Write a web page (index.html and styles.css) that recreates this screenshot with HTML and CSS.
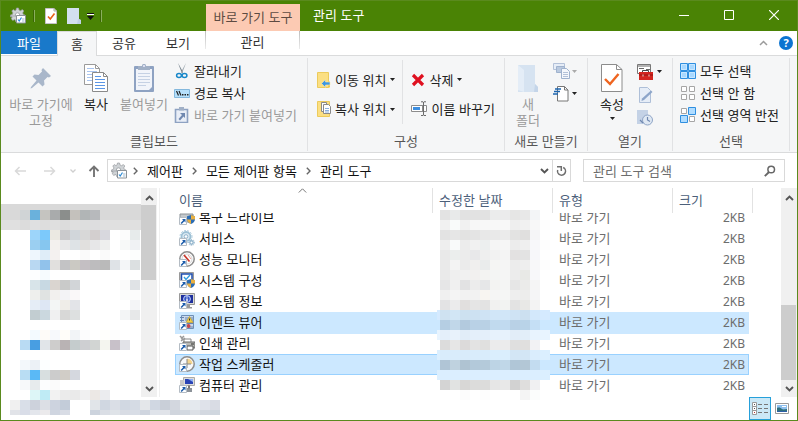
FILE: index.html
```html
<!DOCTYPE html>
<html lang="ko">
<head>
<meta charset="utf-8">
<title>관리 도구</title>
<link rel="stylesheet" href="styles.css">
</head>
<body>
<svg class="defs" aria-hidden="true">
  <defs>
    <symbol id="i-tools" viewBox="0 0 18 18">
      <path d="M7.5 1h2l.5 2 1.500.7 1.900-1.100 1.400 1.400-1.100 1.900.7 1.500 1.500.5v2H1.500v-2l1.800-.5.6-1.500-1.100-1.900 1.400-1.400 1.900 1.100L7 3z" fill="#cfd3d6" stroke="#969a9e" stroke-width=".7"/>
      <path d="M2 9l1.200 1-1 1.800 1.600 1.600 2-1 1.200 2.600H8V9z" fill="#cfd3d6" stroke="#969a9e" stroke-width=".7"/>
      <circle cx="8.500" cy="8" r="2.200" fill="#fff" stroke="#969a9e" stroke-width=".8"/>
      <path d="M7.500 8.500h9v7.500h-9z" fill="#fff" stroke="#8b9298"/>
      <path d="M9 12.500l1.200 1.500 2.300-3.500" fill="none" stroke="#2a8ad6" stroke-width="1.200"/>
      <path d="M13 14h2.500M13 12h2.500" stroke="#9fb9cf"/>
    </symbol>
    <symbol id="i-crumb" viewBox="0 0 5 8"><path d="M.8.8L4 4 .8 7.200" fill="none" stroke="#666" stroke-width="1.400"/></symbol>
    <symbol id="i-up" viewBox="0 0 9 6"><path d="M1 5l3.500-3.500L8 5" fill="none" stroke="#555" stroke-width="1.900"/></symbol>
    <symbol id="i-down" viewBox="0 0 9 6"><path d="M1 1l3.500 3.500L8 1" fill="none" stroke="#555" stroke-width="1.900"/></symbol>
    <symbol id="i-tri" viewBox="0 0 5 3"><path d="M0 0h5L2.500 3z" fill="currentColor"/></symbol>
    <symbol id="i-link" viewBox="0 0 16 16">
      <path d="M.5 8.500h7v7h-7z" fill="#fff" stroke="#b4bcc4"/>
      <path d="M3 10h3.500v3.500l-1.200-1.200L2.700 15l-1.100-1.100 2.600-2.600z" fill="#1b5cab"/>
    </symbol>
    <symbol id="i-shield" viewBox="0 0 8 9">
      <path d="M4 0l4 1.300V4C8 6.500 6 8.200 4 9 2 8.200 0 6.500 0 4V1.300z" fill="#2b6cb4"/>
      <path d="M4 0l4 1.300V4.500H4zM4 4.500V9C2 8.200.3 6.700 0 4.500z" fill="#e9b040"/>
    </symbol>
  </defs>
</svg>
<div class="window">
  <header class="titlebar">
    <div class="quick">
      <button class="plain" aria-label="시스템 메뉴"><svg width="18" height="18"><use href="#i-tools"/></svg></button>
      <i class="tick"></i>
      <button class="plain" aria-label="속성"><svg width="12" height="16" viewBox="0 0 12 16"><path d="M.5.5H9L11.500 3v12.500H.5z" fill="#fff" stroke="#c5c1c9"/><path d="M9 0v3h3" fill="none" stroke="#aaa"/><path d="M3 8.500L5.300 11 9.500 5.500" fill="none" stroke="#e8601c" stroke-width="1.600"/></svg></button>
      <button class="plain" aria-label="새 폴더"><svg width="14" height="16" viewBox="0 0 14 16"><path d="M0 0h12v11l2 1v4H0z" fill="#d3e0f0"/><path d="M10 16l1-5 3 1v4z" fill="#c0d1e7"/></svg></button>
      <button class="plain" aria-label="사용자 지정"><svg width="7" height="7" viewBox="0 0 7 7"><path d="M0 .5h7" stroke="#111"/><path d="M0 1.500h7" stroke="#fff"/><path d="M0 3h7L3.500 7z" fill="#111"/></svg></button>
      <i class="tick"></i>
    </div>
    <div class="context">바로 가기 도구</div>
    <h1>관리 도구</h1>
    <div class="controls">
      <button aria-label="최소화"><svg width="10" height="10"><path d="M0 5.500h10" stroke="#fff"/></svg></button>
      <button aria-label="최대화"><svg width="10" height="10"><path d="M.5.500h9v9h-9z" fill="none" stroke="#fff"/></svg></button>
      <button aria-label="닫기"><svg width="10" height="10"><path d="M0 0l10 10M10 0L0 10" stroke="#fff" stroke-width="1.200"/></svg></button>
    </div>
  </header>

  <nav class="tabs">
    <button class="tab file">파일</button>
    <button class="tab home">홈</button>
    <button class="tab share">공유</button>
    <button class="tab view">보기</button>
    <button class="tab manage">관리</button>
    <div class="tabs-end">
      <button class="plain" aria-label="리본 최소화"><svg width="9" height="6" viewBox="0 0 9 6"><path d="M1 5l3.500-3.500L8 5" fill="none" stroke="#9b9b9b" stroke-width="1.500"/></svg></button>
      <button class="help" aria-label="도움말">?</button>
    </div>
  </nav>

  <section class="ribbon">
    <div class="group">
      <div class="tools clip">
        <button class="large pin off"><svg width="24" height="32" viewBox="0 0 24 32"><path d="M14 4l8 8-2 1.500-1.500-.5-3.500 3.500.5 4-2 2-4-4L3 24l-1.500.5L2 23l5.500-6.500-4-4 2-2 4 .5L13 7.500 12.500 6z" fill="#a9b7ca"/></svg>바로 가기에<br>고정</button>
        <button class="large copy"><svg width="24" height="32" viewBox="0 0 24 32"><path d="M.5.500h11l4 4v16H.5z" fill="#fff" stroke="#9a9a9a"/><path d="M11.500.500v4h4" fill="none" stroke="#9a9a9a"/><path d="M3 4.500h7M3 7.500h10M3 10.500h10M3 13.500h10M3 16.500h5" stroke="#a8c4ef"/><path d="M8.500 8.500h11l4 4v15h-15z" fill="#fff" stroke="#8a8a8a"/><path d="M19.500 8.500v4h4" fill="none" stroke="#8a8a8a"/><path d="M11 12.500h6M11 15.500h10M11 18.500h10M11 21.500h10M11 24.500h10" stroke="#5b96e6"/></svg>복사</button>
        <button class="large paste off"><svg width="22" height="32" viewBox="0 0 22 32"><rect x="1" y="2" width="20" height="26" rx="1" fill="#8ea2c2"/><path d="M3 5h16v18l-3 3H3z" fill="#f1f4fa"/><path d="M5 9.500h12M5 12.500h12M5 15.500h12M5 18.500h12M5 21.500h8" stroke="#c5d1e4"/><path d="M5 2h4c0-3 4-3 4 0h4v4H5z" fill="#a1b0c6"/><circle cx="11" cy="2" r="1" fill="#eef"/></svg>붙여넣기</button>
        <div class="stack">
          <button class="small"><svg width="16" height="16" viewBox="0 0 16 16"><path d="M4 0l5 9-1 1.500z" fill="#6d7a85"/><path d="M12 0L7 9l1 1.500z" fill="#9aa5ae"/><ellipse cx="5" cy="12.500" rx="2.400" ry="2" fill="none" stroke="#1887c9" stroke-width="1.500"/><ellipse cx="10.500" cy="12.500" rx="2.400" ry="2" fill="none" stroke="#1887c9" stroke-width="1.500"/></svg>잘라내기</button>
          <button class="small"><svg width="16" height="16" viewBox="0 0 16 16"><path d="M.5 4.500h15v8H.5z" fill="#b6e0fb" stroke="#84b8dd"/><path d="M2.500 6l2 4.500M5 6l2 4.500" stroke="#222" stroke-width="1.200"/><path d="M8 9.800h1.500M10.500 9.800H12M13 9.800h1.500" stroke="#222" stroke-width="1.400"/></svg>경로 복사</button>
          <button class="small off"><svg width="16" height="16" viewBox="0 0 16 16"><path d="M1.500 2.500h12v13h-12z" fill="#e9eef7" stroke="#8ea2c2" stroke-width="1.600"/><path d="M5 0h5v3.500H5z" fill="#a1b0c6"/><path d="M6 6h5v5L9.500 9.500 6 13.500l-1.500-1.500L8 8z" fill="#7088b0"/></svg>바로 가기 붙여넣기</button>
        </div>
      </div>
      <h2>클립보드</h2>
    </div>
    <div class="group">
      <div class="tools organize">
        <div class="stack wide">
          <button class="small"><svg width="14" height="16" viewBox="0 0 14 16"><path d="M.5.500h11v15H.5z" fill="#fbdf83" stroke="#eccb5c"/><path d="M11 9.500h2v6h-2z" fill="#efc94f"/><path d="M13 10H8.500V7.500L4.500 11.500l4 4V13H13z" fill="#3c97e3" stroke="#fbe9ab" stroke-width=".6"/></svg>이동 위치<svg class="tri" width="5" height="3"><use href="#i-tri"/></svg></button>
          <button class="small"><svg width="14" height="16" viewBox="0 0 14 16"><path d="M.5.500h12v15H.5z" fill="#fbdf83" stroke="#eccb5c"/><path d="M4.500 1.500h5v9h-5z" fill="#fff" stroke="#8a8a8a"/><path d="M6.500 3.500h5l2 2v7h-7z" fill="#fff" stroke="#8a8a8a"/><path d="M8 7.500h4M8 9.500h4M8 11h4" stroke="#6e9ed8" stroke-width=".8"/></svg>복사 위치<svg class="tri" width="5" height="3"><use href="#i-tri"/></svg></button>
        </div>
        <div class="stack wide ruled">
          <button class="small"><svg width="14" height="14" viewBox="0 0 14 14"><path d="M2 2l10 10M12 2L2 12" stroke="#df1020" stroke-width="3.200"/></svg>삭제<svg class="tri" width="5" height="3"><use href="#i-tri"/></svg></button>
          <button class="small"><svg width="16" height="16" viewBox="0 0 16 16"><path d="M.5 4.500h11v6H.5zM11 4.500h4.500v6H11" fill="#fff" stroke="#8c8c8c"/><path d="M2 6h7v3H2z" fill="#3b8ee0"/><path d="M12.500 1v13M10 .8h2l.5.700.500-.7h2M10 14.500h2l.5-.8.500.8h2" fill="none" stroke="#6b6b6b"/></svg>이름 바꾸기</button>
        </div>
      </div>
      <h2>구성</h2>
    </div>
    <div class="group">
      <div class="tools create">
        <button class="large folder off"><svg width="22" height="32" viewBox="0 0 22 32"><path d="M1 1h17v19l3 3v5H1z" fill="#d6e3f1"/><path d="M1 1l6 5v22l-6-2z" fill="#e4edf7"/><path d="M17 28l1-8 3 3v5z" fill="#c4d5e9"/></svg>새<br>폴더</button>
        <div class="stack">
          <button class="small off" aria-label="새 항목"><svg width="17" height="16" viewBox="0 0 17 16"><path d="M.5.500h11v6H.5z" fill="#e6edf7" stroke="#b3c1d8"/><path d="M3.500 3.500h8v6h-8z" fill="#b9c9df" stroke="#9fb2ce"/><path d="M8.500 5.500h5l3 3v7h-8z" fill="#f4f7fc" stroke="#9fb2ce"/><path d="M10 9.500h5M10 11.500h5M10 13.500h5" stroke="#b3c1d8"/></svg><svg class="tri" width="5" height="3"><use href="#i-tri"/></svg></button>
          <button class="small" aria-label="빠른 연결"><svg width="17" height="17" viewBox="0 0 17 17"><path d="M4.500 1.500h7l3.500 3.500v11H4.500z" fill="#fff" stroke="#777"/><path d="M11.500 1.500V5H15" fill="none" stroke="#777"/><path d="M2 4h6M1 6.500h6M0 9h5" stroke="#1c66b0" stroke-width="1.400"/></svg><svg class="tri" width="5" height="3"><use href="#i-tri"/></svg></button>
        </div>
      </div>
      <h2>새로 만들기</h2>
    </div>
    <div class="group">
      <div class="tools open">
        <button class="large prop"><svg width="22" height="32" viewBox="0 0 22 32"><path d="M.5.500h15l5.500 5v22H.5z" fill="#fff" stroke="#8c8c8c"/><path d="M15.500.500v5H21" fill="none" stroke="#8c8c8c"/><path d="M4 15l5 5 8.500-10" fill="none" stroke="#ef6520" stroke-width="2.400"/></svg>속성<br><svg class="tri" width="5" height="3"><use href="#i-tri"/></svg></button>
        <div class="stack">
          <button class="small" aria-label="열기"><svg width="16" height="16" viewBox="0 0 16 16"><path d="M.5.500h13v9H.5z" fill="#fff" stroke="#777"/><path d="M1 2h12M2 4.500h5M9 5.500h4" stroke="#666"/><path d="M5.500 8V6.500h6V8" fill="none" stroke="#444"/><path d="M2 8h14v8H2z" fill="#d3251f"/><path d="M2 11h14" stroke="#8f1512"/><path d="M5.500 10.500h1v2h-1zM11.500 10.500h1v2h-1z" fill="#f6d7cf"/></svg><svg class="tri" width="5" height="3"><use href="#i-tri"/></svg></button>
          <button class="small off" aria-label="편집"><svg width="16" height="16" viewBox="0 0 16 16"><path d="M2.500.500h8l3 3v12h-11z" fill="#e6edf7" stroke="#aebfd8"/><path d="M14 3.500l1.500 1.500L7 13l-2.500 1L5 11.500z" fill="#8da5c9"/></svg></button>
          <button class="small off" aria-label="히스토리"><svg width="16" height="16" viewBox="0 0 16 16"><path d="M0 0h11v14H0z" fill="#c4d2e6"/><circle cx="10.500" cy="10" r="5" fill="#dfe8f3" stroke="#8fa5c6"/><path d="M10.500 7v3l2.500 1.500M3 10l3 3" fill="none" stroke="#7088b0" stroke-width="1.200"/></svg></button>
        </div>
      </div>
      <h2>열기</h2>
    </div>
    <div class="group">
      <div class="tools select">
        <div class="stack">
          <button class="small"><svg width="16" height="16" viewBox="0 0 16 16"><path d="M.5.500h7v7h-7zM8.500.500h7v7h-7zM.5 8.500h7v7h-7zM8.500 8.500h7v7h-7z" fill="#a8d8ff" stroke="#2f8fe0"/><path d="M1.500 1.500h5v5h-5zM9.500 1.500h5v5h-5zM1.500 9.500h5v5h-5zM9.500 9.500h5v5h-5z" fill="none" stroke="#c9e7ff"/></svg>모두 선택</button>
          <button class="small"><svg width="16" height="16" viewBox="0 0 16 16"><path d="M1.500 1.500h5v5h-5zM9.500 1.500h5v5h-5zM1.500 9.500h5v5h-5zM9.500 9.500h5v5h-5z" fill="#fff" stroke="#a6a6a6"/></svg>선택 안 함</button>
          <button class="small"><svg width="16" height="16" viewBox="0 0 16 16"><path d="M1.500 1.500h5v5h-5zM9.500 9.500h5v5h-5z" fill="#fff" stroke="#a6a6a6"/><path d="M8.500.500h7v7h-7zM.5 8.500h7v7h-7z" fill="#b0dcff" stroke="#2f8fe0"/></svg>선택 영역 반전</button>
        </div>
      </div>
      <h2>선택</h2>
    </div>
  </section>

  <div class="address">
    <div class="history">
      <button class="plain arrow" aria-label="뒤로"><svg width="12" height="10" viewBox="0 0 12 10"><path d="M12 5H1.500M5.500 1l-4 4 4 4" fill="none" stroke="#d9d9d9" stroke-width="1.500"/></svg></button>
      <button class="plain arrow" aria-label="앞으로"><svg width="12" height="10" viewBox="0 0 12 10"><path d="M0 5h10.500M6.500 1l4 4-4 4" fill="none" stroke="#d9d9d9" stroke-width="1.500"/></svg></button>
      <button class="plain recent" aria-label="최근 위치"><svg width="6" height="4" viewBox="0 0 6 4"><path d="M.5.500L3 3 5.500.500" fill="none" stroke="#cfcfcf" stroke-width="1.300"/></svg></button>
      <button class="plain up" aria-label="위로"><svg width="12" height="12" viewBox="0 0 12 12"><path d="M6 12V1.500M1.500 6L6 1.500 10.500 6" fill="none" stroke="#747474" stroke-width="1.900"/></svg></button>
    </div>
    <div class="path">
      <svg width="18" height="18"><use href="#i-tools"/></svg>
      <svg width="5" height="8"><use href="#i-crumb"/></svg><a href="#">제어판</a>
      <svg width="5" height="8"><use href="#i-crumb"/></svg><a href="#">모든 제어판 항목</a>
      <svg width="5" height="8"><use href="#i-crumb"/></svg><a href="#">관리 도구</a>
      <button class="plain drop" aria-label="이전 위치"><svg width="9" height="6"><use href="#i-down"/></svg></button>
      <button class="refresh" aria-label="새로 고침"><svg width="11" height="12" viewBox="0 0 11 12"><path d="M7.200 2.500A4 4 0 1 1 1.700 5" fill="none" stroke="#6e6e6e" stroke-width="1.500"/><path d="M1 1.700h4.300v4.300" fill="none" stroke="#6e6e6e" stroke-width="1.500"/></svg></button>
    </div>
    <label class="search"><input type="text" aria-label="검색" placeholder="관리 도구 검색"><svg width="12" height="12" viewBox="0 0 12 12"><circle cx="7.200" cy="4.500" r="3.300" fill="none" stroke="#666" stroke-width="1.500"/><path d="M5 7L.8 11.200" stroke="#666" stroke-width="1.900"/></svg></label>
  </div>

  <main>
    <aside class="tree">
      <div class="tree-body">
        <div class="tree-current"></div>
        <div class="mosaic tree-cells" data-mosaic="tree"></div>
      </div>
      <div class="scroll top"><svg width="9" height="6"><use href="#i-up"/></svg><div class="track"><div class="thumb"></div></div><svg width="9" height="6"><use href="#i-down"/></svg></div>
    </aside>
    <div class="list">
      <table>
        <thead><tr><th>이름<svg class="sort" width="9" height="5" viewBox="0 0 9 5"><path d="M.8 4.500L4.500.800l3.700 3.700" fill="none" stroke="#777"/></svg></th><th>수정한 날짜</th><th>유형</th><th>크기</th></tr></thead>
        <tbody>
          <tr><td><svg width="16" height="16" viewBox="0 0 16 16"><path d="M1 5h13v8H1z" fill="#c3c8cc" stroke="#8c9297"/><use href="#i-link"/><use href="#i-shield" x="8" y="6" width="8" height="9"/></svg>복구 드라이브</td><td></td><td>바로 가기</td><td>2KB</td></tr>
          <tr><td><svg width="16" height="16" viewBox="0 0 16 16"><circle cx="7" cy="6.500" r="6" fill="none" stroke="#a9c9dc" stroke-dasharray="1.800 1.400"/><circle cx="7" cy="6.500" r="4.500" fill="#dbe9f1" stroke="#9cc0d5" stroke-width="1.800"/><circle cx="7" cy="6.500" r="1.800" fill="#fff" stroke="#8fb3cb"/><circle cx="12.500" cy="12.500" r="1.700" fill="#fff" stroke="#8fb3cb" stroke-width="1.400"/><circle cx="12.500" cy="12.500" r="3" fill="none" stroke="#8fb3cb" stroke-dasharray="1 1.200"/><use href="#i-link"/></svg>서비스</td><td></td><td>바로 가기</td><td>2KB</td></tr>
          <tr><td><svg width="16" height="16" viewBox="0 0 16 16"><circle cx="8" cy="8" r="7.200" fill="#fff" stroke="#8d8d8d" stroke-width="1.500"/><circle cx="8" cy="8" r="5" fill="none" stroke="#d7d7d7"/><path d="M5 4l5.500 6.500" stroke="#c9372b" stroke-width="1.800"/><path d="M9 4l3 4" stroke="#e79d94"/><use href="#i-link"/></svg>성능 모니터</td><td></td><td>바로 가기</td><td>2KB</td></tr>
          <tr><td><svg width="16" height="16" viewBox="0 0 16 16"><path d="M.5.500h14v11H.5z" fill="#c8c8c8" stroke="#999"/><path d="M2.500 2h10.500v8H2.500z" fill="#fff" stroke="#1e4db0" stroke-width="1.500"/><path d="M5 5l2 2.500L11 3" fill="none" stroke="#2f9be0" stroke-width="1.300"/><use href="#i-link"/><use href="#i-shield" x="8" y="7" width="8" height="9"/></svg>시스템 구성</td><td></td><td>바로 가기</td><td>2KB</td></tr>
          <tr><td><svg width="16" height="16" viewBox="0 0 16 16"><path d="M.5.500h15v11H.5z" fill="#d9dad4" stroke="#999"/><path d="M2 2h12v8H2z" fill="#1e2f9c"/><circle cx="8" cy="6" r="3.400" fill="#3555c4" stroke="#c6d6ff"/><path d="M8 5.500V8.500M8 3.500v1" stroke="#fff" stroke-width="1.400"/><path d="M8 12h3v2h2v1.500H7z" fill="#999"/><use href="#i-link"/></svg>시스템 정보</td><td></td><td>바로 가기</td><td>2KB</td></tr>
          <tr class="chosen"><td><svg width="16" height="16" viewBox="0 0 16 16"><path d="M2.500 1.500h12v13h-12z" fill="#c9d9ec" stroke="#6e8fb5"/><path d="M1 3.500h4M1 6.500h4M9 13h5M6 4h8M6 6h8M6 9.500h8" stroke="#6885b0"/><path d="M10.500 2.500l3.500 6H7z" fill="#f3cf45" stroke="#c09a2a" stroke-width=".7"/><path d="M10.500 4.500v2" stroke="#333"/><circle cx="9.500" cy="12" r="2" fill="#c8474a"/><use href="#i-link"/></svg>이벤트 뷰어</td><td></td><td>바로 가기</td><td>2KB</td></tr>
          <tr><td><svg width="16" height="16" viewBox="0 0 16 16"><path d="M5 4h7v4H5z" fill="#fff" stroke="#888"/><path d="M4 7h12v6H4z" fill="#b8b8b3" stroke="#666"/><path d="M8 11h6v4H8z" fill="#fff" stroke="#555"/><path d="M1 1l4 4M5 1L2 4M2 6l4-3" stroke="#999" stroke-width="1.500"/><path d="M12 9h3" stroke="#333"/><use href="#i-link"/></svg>인쇄 관리</td><td></td><td>바로 가기</td><td>2KB</td></tr>
          <tr class="chosen focused"><td><svg width="16" height="16" viewBox="0 0 16 16"><circle cx="8" cy="8" r="7.200" fill="#f7f8fa" stroke="#8d8d8d" stroke-width="1.500"/><path d="M8 8V2.500A5.500 5.500 0 0 1 13.500 8z" fill="#f3d38c"/><path d="M8 3v9M4 8h8" fill="none" stroke="#888"/><use href="#i-link"/></svg>작업 스케줄러</td><td></td><td>바로 가기</td><td>2KB</td></tr>
          <tr><td><svg width="16" height="16" viewBox="0 0 16 16"><path d="M4.500.500h11v8h-11z" fill="#ddd" stroke="#aaa"/><path d="M6 2h8v5H6z" fill="#2943b5"/><path d="M9 2h5v3z" fill="#8fb0f5"/><path d="M1 3h4v5H1z" fill="#c8c8c8"/><path d="M8 11h5v4H8z" fill="#8c9299"/><path d="M10 8.500v3" stroke="#777" stroke-width="2"/><use href="#i-link"/></svg>컴퓨터 관리</td><td></td><td>바로 가기</td><td>2KB</td></tr>
        </tbody>
      </table>
      <div class="mosaic date-cells" data-mosaic="dates"></div>
      <div class="scroll bottom"><svg width="9" height="6"><use href="#i-up"/></svg><div class="track"><div class="thumb"></div></div><svg width="9" height="6"><use href="#i-down"/></svg></div>
    </div>
  </main>

  <footer class="status">
    <div class="mosaic status-cells" data-mosaic="status"></div>
    <button class="details" aria-label="자세히"><svg width="16" height="13" viewBox="0 0 16 13"><path d="M.5.500h4v4h-4zM.5 4.500h4v4h-4zM.5 8.500h4v4h-4z" fill="#fff" stroke="#999"/><path d="M2 2.500h1M2 6.500h1" stroke="#555"/><path d="M2 10.500h1" stroke="#b33"/><path d="M6 2.500h4M12 2.500h4M6 6.500h4M12 6.500h4M6 10.500h4M12 10.500h4" stroke="#777"/></svg></button>
    <button class="plain" aria-label="큰 아이콘"><svg width="14" height="11" viewBox="0 0 14 11"><path d="M.5.500h13v10H.5z" fill="#fff" stroke="#999"/><path d="M2 2h10v7H2z" fill="#8fc0ee"/><path d="M2 5c2-1 4 0 5 1s3 0 5 0v3H2z" fill="#2f6f7c"/><path d="M2 8h10v1H2z" fill="#2c5fa8"/><path d="M7 3.500h4" stroke="#fff"/></svg></button>
  </footer>
</div>
<script src="mosaic.js"></script>
</body>
</html>
```
FILE: styles.css
```css
* { box-sizing: border-box; }
body {
  margin: 0;
  font: 13px/16px "Noto Sans CJK KR", sans-serif;
  color: #222;
  background: #fff;
}
button { font: inherit; color: inherit; padding: 0; border: 0; background: none; }
svg { display: block; flex: none; }
h1, h2 { margin: 0; font-size: 13px; font-weight: 400; }
.defs { position: absolute; width: 0; height: 0; }
.plain { display: grid; place-items: center; }

.window {
  display: flex;
  flex-direction: column;
  height: 100vh;
  border: 1px solid #5a8a1e;
  overflow: hidden;
}

/* Title bar */
.titlebar { display: flex; flex: none; height: 30px; background: #4a8305; color: #fff; }
.quick { display: flex; align-items: center; width: 205px; padding-left: 8px; }
.quick .plain { margin-right: 6px; }
.quick .tick + .plain { margin-right: 10px; }
.tick { width: 2px; height: 12px; margin-right: 10px; border: solid #3a6803; border-width: 0 0 0 1px; background: #8aaf5d; }
.context { width: 94px; margin-top: 3px; line-height: 26px; text-align: center; background: #fccab3; color: #5d4a42; }
h1 { flex: 1; padding-left: 13px; line-height: 28px; }
.controls { display: flex; padding-right: 1px; }
.controls button { display: grid; place-items: center; width: 45px; height: 28px; }

/* Tabs */
.tabs { display: flex; flex: none; height: 25px; border-bottom: 1px solid #dadbdc; }
.tab { line-height: 22px; color: #333; text-align: center; }
.file { width: 56px; height: 23px; background: #1979ca; color: #fff; }
.home { width: 40px; height: 25px; border: solid #dadbdc; border-width: 1px 1px 0; background: #f5f6f7; }
.share { width: 54px; }
.view { width: 54px; }
.manage { width: 95px; height: 18px; border: 1px solid; border-width: 0 1px; border-image: linear-gradient(#bbb, #eee) 1; }
.tabs-end { display: flex; flex: 1; justify-content: flex-end; align-items: center; gap: 11px; padding-right: 4px; }
.help { width: 14px; height: 14px; border-radius: 7px; background: #0b74d1; color: #fff; font: bold 11px/14px "Noto Sans", sans-serif; }

/* Ribbon */
.ribbon {
  display: grid;
  grid-template-columns: 307px 197px 83px 85px 117px;
  flex: none;
  padding: 2px 0 1px;
  background: #f5f6f7;
  border-bottom: 1px solid #dadbdc;
}
.group { display: flex; flex-direction: column; border-right: 1px solid #e1e2e4; }
.group h2 { line-height: 20px; text-align: center; color: #555; }
.tools { display: flex; height: 73px; padding-top: 2px; }
.stack { display: flex; flex-direction: column; }
.small { display: flex; align-items: center; gap: 4px; height: 22px; text-align: left; white-space: nowrap; color: #222; }
.large { line-height: 16px; text-align: center; white-space: nowrap; align-self: flex-start; color: #222; }
.large svg { margin: 4px auto 0; }
.small.off, .large.off { color: #9a9a9a; }
.tri { color: #222; }
.off .tri { color: #aaa; }
.large .tri { margin-top: 5px; }
.clip { padding-left: 7px; }
.pin { width: 66px; }
.copy { width: 44px; }
.paste { width: 52px; }
.clip .stack { margin-left: 4px; }
.organize { padding-left: 9px; }
.wide .small { height: 30px; }
.organize .stack { height: 64px; padding-top: 5px; }
.ruled { margin-left: 7px; padding-left: 8px; border-left: 1px solid #e1e2e4; }
.create { padding-left: 7px; }
.folder { width: 32px; }
.create .stack { margin-left: 9px; }
.create .small { gap: 2px; }
.open { padding-left: 7px; }
.prop { width: 34px; }
.open .stack { margin-left: 8px; }
.open .small { height: 23px; }
.select { padding-left: 7px; }

/* Address bar */
.address { display: flex; flex: none; height: 35px; padding: 6px 12px 6px 0; }
.history { display: flex; align-items: center; width: 106px; padding-left: 7px; gap: 6px; }
.arrow { width: 24px; }
.recent { width: 10px; }
.up { width: 20px; }
.path { display: flex; flex: 1; align-items: center; gap: 9px; border: 1px solid #d9d9d9; padding-left: 2px; white-space: nowrap; }
.path > svg:first-child { margin-right: -4px; }
.path a { color: #111; text-decoration: none; }
.drop { margin: 0 -6px 0 auto; }
.refresh { display: grid; place-items: center; width: 18px; height: 21px; border-left: 1px solid #d9d9d9; }
.search { display: flex; align-items: center; width: 202px; margin-left: 12px; padding: 0 8px 0 9px; border: 1px solid #d9d9d9; }
.search input { flex: 1; min-width: 0; padding: 0; border: 0; outline: 0; font: inherit; }
.search input::placeholder { color: #6d6d6d; }

/* Panes */
main { display: flex; flex: 1; min-height: 0; }
.tree { display: flex; width: 159px; padding-right: 2px; border-right: 1px solid #f0f0f0; }
.tree-body { position: relative; flex: 1; padding-top: 22px; }
.tree-current { position: absolute; top: 16px; left: 0; right: 0; height: 26px; background: linear-gradient(#d9d9d9 16px, #e0e0e0 16px); }
.mosaic { display: grid; grid-auto-rows: 10px; }
.tree-cells { position: relative; grid-template-columns: 9px repeat(13, 10px); }
.date-cells { position: absolute; top: 22px; left: 277px; grid-template-columns: 3px repeat(11, 10px); }
.status-cells { grid-template-columns: repeat(21, 10px); grid-template-rows: 10px 5px; margin-right: auto; }
.scroll { display: flex; flex-direction: column; align-items: center; width: 16px; padding: 7px 0 5px; background: #f0f0f0; }
.track { display: flex; flex: 1; align-self: stretch; margin: 4px 0 6px; padding-right: 1px; }
.thumb { flex: 1; background: #cdcdcd; }
.top .thumb { height: 43%; }
.bottom .track { align-items: flex-end; }
.bottom .thumb { height: 43%; }

.list { position: relative; display: flex; flex: 1; min-width: 0; }
table { display: flex; flex-direction: column; flex: 1; min-width: 0; color: #6d6d6d; }
thead { display: block; padding: 0 28px 0 15px; }
tr { display: grid; grid-template-columns: 1fr 120px 120px 80px; }
th { position: relative; height: 25px; padding: 0 0 0 6px; border-right: 1px solid #e2e2e2; font-weight: 400; line-height: 24px; text-align: left; color: #4c607a; }
th:first-child { padding-left: 4px; }
.sort { position: absolute; top: 0; left: 50%; margin-left: -6px; }
tbody { display: flex; flex-direction: column; flex: 1; justify-content: flex-end; min-height: 0; padding: 0 32px 1px 15px; overflow: hidden; }
tbody tr { flex: none; grid-template-columns: 1fr 120px 120px 76px; height: 21px; }
td { padding: 0 0 0 6px; line-height: 20px; }
td:first-child { display: flex; align-items: center; gap: 4px; height: 20px; padding-left: 4px; color: #111; }
td:last-child { padding-right: 4px; text-align: right; font: 12px/22px "Noto Sans", sans-serif; }
.chosen { background: #cce8ff; box-shadow: 0 1px #cce8ff; }
.focused { box-shadow: inset 0 0 0 1px #99d1ff; }

/* Status bar */
.status { display: flex; flex: none; height: 23px; padding: 0 8px 0 9px; gap: 4px; }
.status-cells { padding-top: 3px; }
.details { display: grid; place-items: center; width: 22px; border: 1px solid #26a0da; background: #cbe8f6; }
```
FILE: mosaic.js
```js
// Cell colours for the pixelated areas; "-" leaves a cell clear.
const mosaics = {
  tree: `
- - d0d4d6 6ab1dc c5c4c0 a9abac 8b8e8c c4c1bc b1b5b6 b7b9bc - - - -
- - dcdcdc dfe0e1 dddddd dfdfdf dcdcdc dfdfdf dddede dddddf - - - -
- - - 9dd5fa 7cc9fb ebe9e2 cacacc d1d6da d8d8d8 d3cfcf d8d8de - fcfcfc e7ebeb
- - - 9bcff1 86c6ef f3f1ee e8e8e9 dee3e6 e1e0de e7e7e8 eeefee - f7f9f8 f0f2f4
- - - eef6fd dfedf8 f4f1f0 - - fafafa - fafafa - - fcfefd
- - - b9d8f2 91c2eb e1e0de c3c3c5 cbc9c3 c4bfc3 bdbcbe bababa dfe3e7 f4f6f8 dce0e1
- - - fdfeff f6fbfe - - - - - - - - -
- - - d8e4e9 c8d9e3 dad5d0 c9cac9 d2d5d8 - - - - fafafa e0e3e6
- - - eeefed e0e3e2 f2f0ee f3f3f6 faf8f9 - - - - fafcfb fcfcfc
- - - e5edf6 dee7f4 f3f6f5 efede8 e3e4e8 - - - - - f4f5f7
- - - c2cdd1 cbd8df f0f0f1 d8d8d7 dde0e0 - - - - f3f5f6 e7e8e9
- - - - - - - - - - - - - -
- - - f3faff fefbf8 f7f9fc fffdf9 f2f4f7 fcfcfd - fffffc fdfdfd - -
- - b9dbf3 489ee2 e1e5e9 cecdcc b9b3b4 c5cccd cecfd2 d2d5d3 f4f5ef c8c1c9 e2e3e8 -
- - - - - - - - - - - - - -
- - f3f8fb ecf1f6 fcffff - - - - - - - - -
- - b9ddf3 5ab9f6 d8dfe0 cccccc d1cdc7 d5d8df - - - - - -
- - f7f9fa e7ebed fcfdfe fbfbfb - - - - - - - -
- - - ddf6f7 bfebf5 f2f2f2 ebebeb eaeaea f0f0f1 ece8e5 ebecef - - -`,
  dates: `
- e3e3e3 e8eaea e2e2e2 e2e2e2 e2e2e2 ebecec ebebec e6e6e5 e8e8e8 f3f5f7 -
- f1f1f1 f9fbfa f1f1f1 f7f7f7 f8f8f8 f8f8f8 f8f8f8 eeeeee f1f1f1 f8f8f8 fdfdfd
- e3e3e3 e6e6e6 e3e3e2 e4e4e4 e8e8e8 e9e9e9 ebebeb e3e3e2 e0dfde f5f5f7 -
- eeeeee f9fafa ececec f1f1f1 ecefef f5f5f5 f6f6f6 ececec efefef f8f8fa fdfdfd
- e9e9e9 ebeeed ececec e8e8ea efefef f2f2f2 f4f4f4 e3e1e1 e3e3e3 f7f7fa -
- eaeaea f3f3f3 ebebeb f0efee eaecec f5f5f3 f5f5f5 ececec eeeeee f8f8f9 fdfdfd
- eaeaea efefef f1f1f1 f2f0ef f3f3f2 f3f5f4 f5f5f5 ececec e8e9e6 f8f8fa -
- e6e6e7 f0f0f0 e2e2e3 ececec e6e7e8 f3f3f2 f4f5f4 e6e6e6 ebebea f5f5f5 -
- f0f0f0 f4f4f4 f2f2f2 f2f2f2 f8f5f1 f5f5f5 f5f6f5 eeeeee ededec f5f5f7 -
- e3e3e4 ebebec e1dfde e5e5e5 e3e3e3 f1f1f0 f2f3f2 e3e3e3 e8e8e6 f3f3f3 -
d5eaff cfe2f1 d2e6f5 cde1f0 cde1f2 cfe3f4 d1e6f8 d1e6f8 cfe3f4 cce0f0 d3e8fb d5eaff
cce8ff b5cee3 c1d7e9 b3cade b9d1e6 b9d1e5 c1daee c1daf0 b9d1e6 b9d3e8 c5dff5 cce8ff
e8f4ff e4effa e8f2fb e1edf8 e4effa e4effa e7f2fc e7f2fc e2edf8 e2eef9 e8f3fe e8f4ff
- dcdcdc e6e6e6 dcdada e3e3e3 e0e0df ebebec ebebec dfdfdf e0dfde f2f2f4 -
dbefff d9ecfb d9ecfb d9ebfa d9ecfb d9ecfb daeefd daeefd d3e6f5 d3e6f5 daedfd dbefff
cce8ff b0c5d6 bfd2df afc3d2 b3c9da b4cada bdd4e5 c0d7e8 b0c6d7 b3c7d6 c3dcf0 cce8ff
dbefff dbeeff dbeeff dbeeff dbeeff dbeeff dbeeff dbeeff dbeeff dbeeff dbeeff dbefff
- d4d4d4 e1e3e2 d8d7d6 dcdcdb dcdcdb e6e6e6 e8e8e8 d2d2d2 dfdedd f0f0f2 -
- - - fcfcfc - fdfdfd - - - f4f4f4 fbfdfc -`,
  status: `
f0f0f0 d9dfe8 cdd2dc dcdfe5 cdd3df c3ccd9 - - e1e5e9 d0d7e1 dadee6 d1d8e2 d5dbe4 e4e7ea d0d7e2 c9cfd8 d3d7df e4e8eb e4e9ee dfe2ea d9dce4
e1e3e8 d9dde8 e3e6ec ebeaec cfd5e0 d8dce5 - - ccd3dd dadee5 dfe3e8 d8dce4 d8dde6 cfd5df dfe3ea e0e3e9 d0d5dd d2d8e0 dce0e6 d3d8e0 d0d7df`
};

document.querySelectorAll("[data-mosaic]").forEach((box) => {
  mosaics[box.dataset.mosaic].trim().split(/\s+/).forEach((colour) => {
    const cell = document.createElement("i");
    if (colour !== "-") cell.style.background = "#" + colour;
    box.append(cell);
  });
});
```
